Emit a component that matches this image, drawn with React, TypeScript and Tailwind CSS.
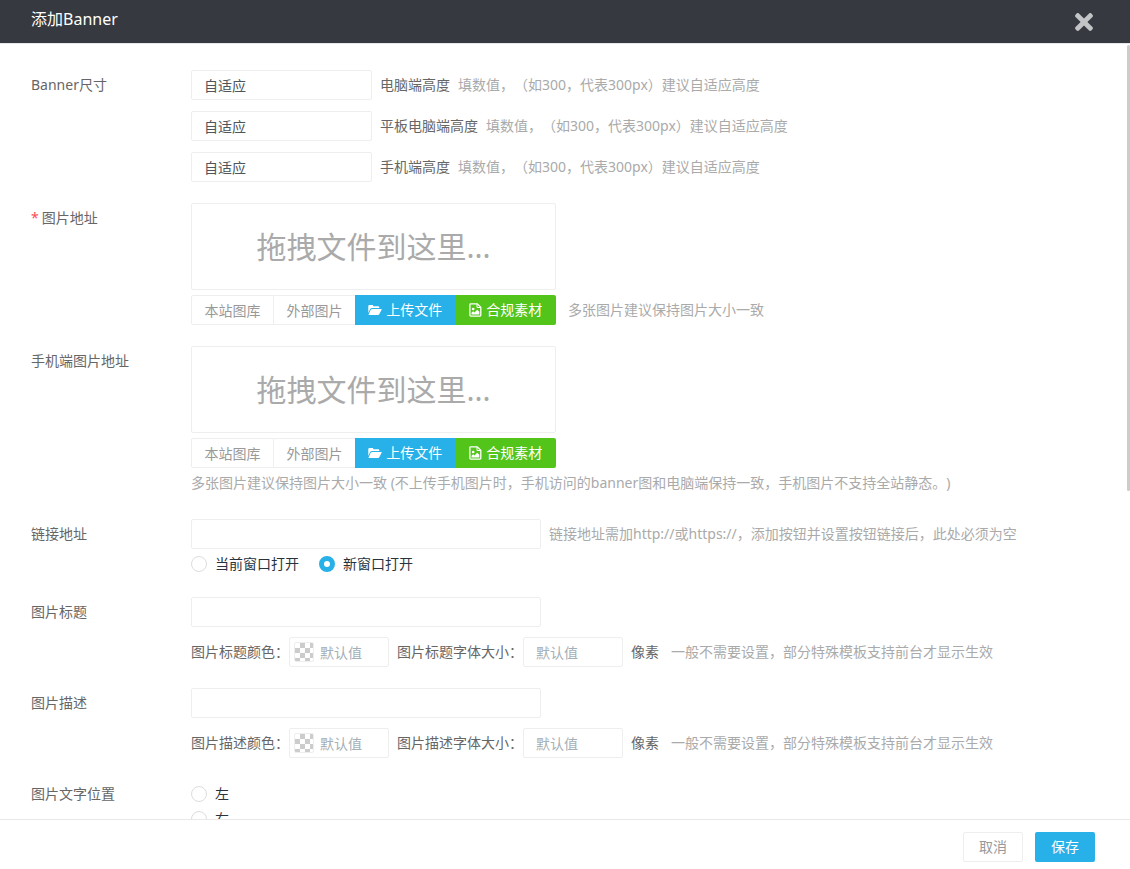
import React, { FC, ReactNode, useState } from "react";
import { FaTimes } from "react-icons/fa";

const HINT = "text-[#aaa]";
const INPUT =
  "h-[30px] rounded-xs border border-[#eee] bg-white px-3 text-sm text-[#4e555b] outline-none placeholder:text-[#a4b0b8]";

const FolderIcon: FC = () => (
  <svg width="14" height="12" viewBox="0 0 14 12" fill="currentColor">
    <path d="M0.3 9V2.2C0.3 1.4 0.8 1 1.5 1H4.2C4.9 1 5.3 1.4 5.3 2V2.3H10C10.8 2.3 11.3 2.8 11.3 3.5V4.1H4.2C3.3 4.1 2.6 4.4 2.1 5.1Z" />
    <path d="M4.3 4.9H13.1C13.7 4.9 13.9 5.3 13.6 5.8L11.4 10.1C11.1 10.7 10.6 11 10 11H1.1C0.6 11 0.4 10.6 0.7 10.2L2.7 5.8C3 5.2 3.6 4.9 4.3 4.9Z" />
  </svg>
);

const ImageFileIcon: FC = () => (
  <svg width="13" height="14" viewBox="0 0 13 14" fill="none">
    <path
      d="M1.7 0.8H8.3L11.8 4.2V12.3C11.8 12.8 11.5 13.1 11 13.1H1.7C1.2 13.1 0.9 12.8 0.9 12.3V1.6C0.9 1.1 1.2 0.8 1.7 0.8Z"
      stroke="currentColor"
      strokeWidth="1.3"
    />
    <path d="M8 1V4.5H11.6" stroke="currentColor" />
    <circle cx="4.2" cy="6" r="1.3" fill="currentColor" />
    <path
      d="M2.5 11.4V9.8L4.2 8.3L5.5 9.4L8.2 6.7L10.3 8.8V11.4Z"
      fill="currentColor"
    />
  </svg>
);

interface FieldProps {
  label: string;
  htmlFor?: string;
  required?: boolean;
  children: ReactNode;
}

const Field: FC<FieldProps> = ({ label, htmlFor, required, children }) => (
  <div className="flex">
    <label htmlFor={htmlFor} className="w-40 shrink-0">
      {required && <span className="mr-[3px] text-[#ff4c52]">*</span>}
      {label}
    </label>
    <div className="min-w-0 flex-1">{children}</div>
  </div>
);

const sizes = [
  { id: "height-pc", label: "电脑端高度" },
  { id: "height-pad", label: "平板电脑端高度" },
  { id: "height-phone", label: "手机端高度" },
];

interface UploaderProps {
  hint?: string;
}

const Uploader: FC<UploaderProps> = ({ hint }) => (
  <>
    <div className="flex h-[87px] w-[365px] items-center justify-center rounded-xs border border-[#eee] text-3xl text-[#aaa]">
      拖拽文件到这里...
    </div>
    <div className="mt-[5px] flex">
      <div className="flex w-[365px] text-[#999]">
        <button
          type="button"
          className="h-[30px] w-[83px] rounded-l-xs border border-[#eee]"
        >
          本站图库
        </button>
        <button type="button" className="h-[30px] w-[81px] border-y border-[#eee]">
          外部图片
        </button>
        <button
          type="button"
          className="flex h-[30px] flex-1 items-center justify-center gap-1 bg-[#28b1e8] text-white"
        >
          <FolderIcon />
          上传文件
        </button>
        <button
          type="button"
          className="flex h-[30px] flex-1 items-center justify-center gap-1 rounded-r-xs bg-[#52c41a] text-white"
        >
          <ImageFileIcon />
          合规素材
        </button>
      </div>
      {hint && <span className={`ml-3 ${HINT}`}>{hint}</span>}
    </div>
  </>
);

interface RadioProps {
  name: string;
  label: string;
  checked: boolean;
  onChange: () => void;
}

const Radio: FC<RadioProps> = ({ name, label, checked, onChange }) => (
  <label className="flex items-center gap-2 text-[#2a333c]">
    <input
      type="radio"
      name={name}
      checked={checked}
      onChange={onChange}
      className="size-4 appearance-none rounded-full border border-[#ddd] bg-white checked:border-5 checked:border-[#28b1e8]"
    />
    {label}
  </label>
);

interface TextStyleProps {
  id: string;
  label: string;
}

const TextStyle: FC<TextStyleProps> = ({ id, label }) => (
  <Field label={label} htmlFor={id}>
    <input id={id} type="text" className={`${INPUT} block w-[350px]`} />
    <div className="mt-[10px] flex">
      <label htmlFor={`${id}-color`}>{label}颜色：</label>
      <div className="relative h-[30px]">
        <input
          id={`${id}-color`}
          type="text"
          placeholder="默认值"
          className="block h-[30px] w-[100px] rounded-xs border border-[#eee] pr-2 pl-[30px] text-sm outline-none placeholder:text-[#a4b0b8]"
        />
        <span className="absolute top-[5px] left-[5px] size-5 rounded-xs border border-[#eee] bg-[conic-gradient(#ccc_25%,#fff_0_50%,#ccc_0_75%,#fff_0)] bg-[length:10px_10px]" />
      </div>
      <label htmlFor={`${id}-size`} className="ml-2">
        {label}字体大小：
      </label>
      <input
        id={`${id}-size`}
        type="text"
        placeholder="默认值"
        className={`${INPUT} w-[100px]`}
      />
      <span className="ml-2">像素</span>
      <span className={`ml-3 ${HINT}`}>
        一般不需要设置，部分特殊模板支持前台才显示生效
      </span>
    </div>
  </Field>
);

const App: FC = () => {
  const [target, setTarget] = useState("new");
  const [position, setPosition] = useState("");

  return (
    <div className="flex h-screen flex-col bg-white font-['Noto_Sans','Noto_Sans_CJK_SC',sans-serif] text-sm leading-[30px] text-[#666] [text-spacing-trim:space-all]">
      <header className="flex h-11 shrink-0 items-center justify-between border-b border-[#e4eaec] bg-[#363940] pr-[33px] pl-[31px]">
        <h1 className="pb-1.5 text-base text-white">添加Banner</h1>
        <button type="button" aria-label="关闭" className="text-[#c3c4c6]">
          <FaTimes size={26} />
        </button>
      </header>

      <div className="relative min-h-0 flex-1">
        <main className="flex h-full flex-col gap-[21px] overflow-y-auto pt-[26px] pr-8 pl-[31px] [scrollbar-width:none]">
          <Field label="Banner尺寸" htmlFor="height-pc">
            <div className="flex flex-col gap-[11px]">
              {sizes.map(({ id, label }) => (
                <div key={id} className="flex gap-2">
                  <input
                    id={id}
                    type="text"
                    defaultValue="自适应"
                    className={`${INPUT} w-[181px]`}
                  />
                  <label htmlFor={id}>{label}</label>
                  <span className={HINT}>
                    填数值，（如300，代表300px）建议自适应高度
                  </span>
                </div>
              ))}
            </div>
          </Field>

          <Field label="图片地址" required>
            <Uploader hint="多张图片建议保持图片大小一致" />
          </Field>

          <Field label="手机端图片地址">
            <Uploader />
            <p className={HINT}>
              多张图片建议保持图片大小一致
              (不上传手机图片时，手机访问的banner图和电脑端保持一致，手机图片不支持全站静态。)
            </p>
          </Field>

          <Field label="链接地址" htmlFor="link">
            <div className="flex gap-2">
              <input id="link" type="text" className={`${INPUT} w-[350px]`} />
              <span className={HINT}>
                链接地址需加http://或https://，添加按钮并设置按钮链接后，此处必须为空
              </span>
            </div>
            <div className="mt-[3px] flex h-6 gap-5">
              <Radio
                name="target"
                label="当前窗口打开"
                checked={target === "self"}
                onChange={() => setTarget("self")}
              />
              <Radio
                name="target"
                label="新窗口打开"
                checked={target === "new"}
                onChange={() => setTarget("new")}
              />
            </div>
          </Field>

          <TextStyle id="title" label="图片标题" />
          <TextStyle id="desc" label="图片描述" />

          <Field label="图片文字位置">
            <div className="flex flex-col items-start pt-[2px] leading-[25px]">
              {["左", "右"].map((name) => (
                <Radio
                  key={name}
                  name="position"
                  label={name}
                  checked={position === name}
                  onChange={() => setPosition(name)}
                />
              ))}
            </div>
          </Field>
        </main>
        <div className="absolute top-px right-0 h-[57.5%] w-[3px] rounded-full bg-[#ccc]" />
      </div>

      <footer className="flex h-[50px] shrink-0 items-start justify-end gap-3 border-t border-[#e9e9e9] pt-3 pr-[35px]">
        <button
          type="button"
          className="flex h-[30px] w-[60px] items-center justify-center rounded-xs border border-[#eee] text-[#999]"
        >
          取消
        </button>
        <button
          type="button"
          className="flex h-[30px] w-[60px] items-center justify-center rounded-xs bg-[#28b1e8] text-white"
        >
          保存
        </button>
      </footer>
    </div>
  );
};

export default App;
